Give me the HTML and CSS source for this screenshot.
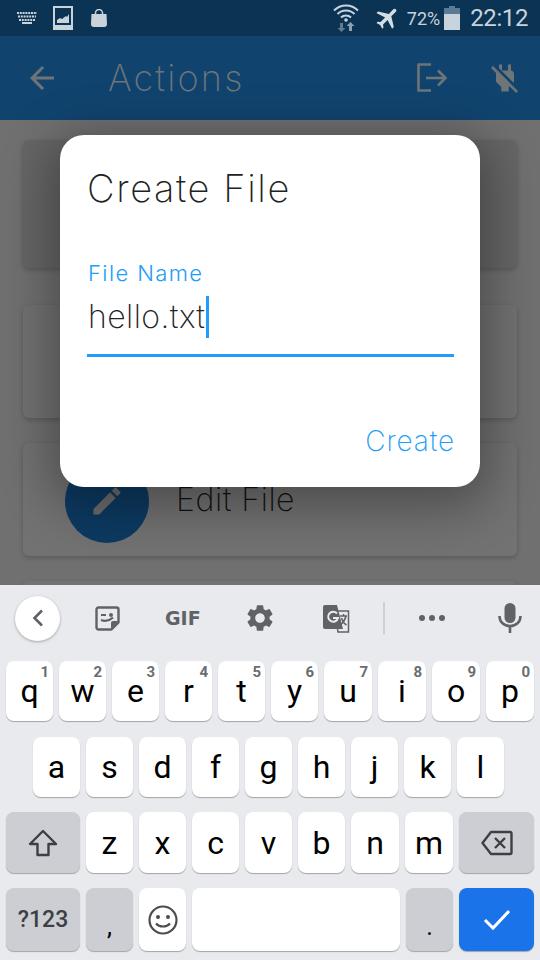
FILE: index.html
```html
<!DOCTYPE html>
<html lang="en">
<head>
  <meta charset="UTF-8">
  <meta name="viewport" content="width=device-width, initial-scale=1.0">
  <title>Create File</title>
  <link rel="stylesheet" href="styles.css">
</head>
<body>
  <div class="phone">

    <!-- status bar -->
    <div class="status-bar">
      <div class="status-left">
        <svg width="20" height="12" viewBox="0 0 20 12"><g fill="none" stroke="#c9d3dc" stroke-width="2"><path stroke-dasharray="2 .8" d="M0 1h20"/><path stroke-dasharray="2 .8" d="M1 4.500h18"/><path stroke-dasharray="2 .8" d="M2 8h16"/><path d="M5 11h10"/></g></svg>
        <svg class="picture-icon" width="20" height="24" viewBox="0 0 20 24"><path fill="#c9d3dc" fill-rule="evenodd" d="M0 0h20v24H0zM2 2v17h16V2z"/><path fill="#c9d3dc" d="M4 17v-3l3-2 2 1 4-3 1 1 2-3v9z"/></svg>
        <svg class="bag-icon" width="16" height="18" viewBox="0 0 16 18"><path fill="none" stroke="#c9d3dc" stroke-width="1.500" d="M4.500 5V4a3.500 3.500 0 0 1 7 0v1"/><path fill="#c9d3dc" d="M.5 5h15l.5 10c0 2-1 3-3 3H3c-2 0-3-1-3-3z"/></svg>
      </div>
      <div class="status-right">
        <svg class="wifi-icon" width="26" height="30" viewBox="0 0 26 30"><g fill="none" stroke="#c9d3dc" stroke-width="2"><path d="M1 7.500a17 17 0 0 1 24 0"/><path d="M4.500 11a12 12 0 0 1 17 0"/><path d="M8 14.500a7 7 0 0 1 10 0"/></g><circle cx="13" cy="17" r="1.800" fill="#c9d3dc"/><path fill="#66798a" d="M7 20h3v5h2.500l-4 4-4-4H7z"/><path fill="#8fa0ae" d="M16 28h3v-5h2.500l-4-4-4 4H16z"/></svg>
        <svg class="plane-icon" width="28" height="28" viewBox="0 0 24 24"><path fill="#d5dde4" transform="rotate(45 12 12)" d="M21 16v-2l-8-5V3.500c0-.83-.67-1.500-1.500-1.500S10 2.670 10 3.500V9l-8 5v2l8-2.500V19l-2 1.500V22l3.500-1 3.500 1v-1.500L13 19v-5.500l8 2.500z"/></svg>
        <span class="battery-text">72%</span>
        <svg class="battery-icon" width="16" height="24" viewBox="0 0 16 24"><path fill="#5b7a94" d="M5 0h6v2h5v7H0V2h5z"/><path fill="#c9d3dc" d="M0 8h16v16H0z"/></svg>
        <span class="clock">22:12</span>
      </div>
    </div>

    <!-- app bar -->
    <header class="app-bar">
      <svg class="back-icon" width="36" height="36" viewBox="0 0 24 24"><path fill="#6f7478" d="M20 11H7.830l5.590-5.590L12 4l-8 8 8 8 1.410-1.410L7.830 13H20v-2z"/></svg>
      <h1 class="app-title">Actions</h1>
      <svg class="exit-icon" width="32" height="30" viewBox="0 0 32 30"><path fill="none" stroke="#6f7478" stroke-width="2.600" stroke-linejoin="round" d="M15 1.500H2.500v26H15"/><path fill="none" stroke="#6f7478" stroke-width="2.600" d="M10 15h19M22 7.500l7.500 7.500-7.500 7.500"/></svg>
      <svg class="plug-icon" width="36" height="36" viewBox="0 0 24 24"><path fill="#6f7478" d="M18 14.490V9c0-1-1.010-2.010-2-2V3h-2v4h-4V3H8v2.480l9.510 9.500.49-.49zm-1.760 1.770L7.200 7.200l-.01.010L3.980 4 2.710 5.250l3.360 3.360C6.040 8.740 6 8.870 6 9v5.480L9.500 18v3h5v-3l.48-.48L19.450 22l1.260-1.280-4.470-4.460z"/></svg>
    </header>

    <!-- cards behind the dialog -->
    <main class="content">
      <div class="card card-top"></div>
      <div class="card card-action"></div>
      <div class="card card-action">
        <div class="action-circle">
          <svg width="36" height="36" viewBox="0 0 24 24"><path fill="#6d6d6d" d="M3 17.250V21h3.750L17.810 9.940l-3.750-3.750L3 17.250zM20.710 7.040c.39-.39.39-1.020 0-1.410l-2.340-2.340c-.39-.39-1.020-.39-1.410 0l-1.830 1.830 3.750 3.750 1.830-1.830z"/></svg>
        </div>
        <span class="action-label">Edit File</span>
      </div>
      <div class="card card-action"></div>
    </main>

    <!-- dialog -->
    <section class="dialog">
      <h2 class="dialog-title">Create File</h2>
      <label class="field-label">File Name</label>
      <div class="field-value">hello.txt<span class="caret"></span></div>
      <div class="dialog-actions"><span class="create-btn">Create</span></div>
    </section>

    <!-- keyboard -->
    <div class="keyboard">
      <div class="kb-tools">
        <div class="kb-back">
          <svg width="14" height="20" viewBox="0 0 14 20"><path fill="none" stroke="#5f6368" stroke-width="2.600" d="M11 2.500 3.500 10l7.500 7.500"/></svg>
        </div>
        <svg class="tool-sticker" width="25" height="25" viewBox="0 0 25 25"><path fill="none" stroke="#5f6368" stroke-width="2.400" stroke-linejoin="round" d="M3.500 1.500h18a2 2 0 0 1 2 2v13l-7 7h-13a2 2 0 0 1-2-2v-18a2 2 0 0 1 2-2z"/><path fill="#5f6368" d="M16 23v-6a2 2 0 0 1 2-2h6zM6 8h5v2H6zM16 7a2 2 0 1 1 0 4 2 2 0 0 1 0-4z"/><path fill="none" stroke="#5f6368" stroke-width="2.200" d="M6 14c4 1.500 8 1 12-2.500"/></svg>
        <span class="tool-gif">GIF</span>
        <svg class="tool-gear" width="32" height="32" viewBox="0 0 24 24"><path fill="#5f6368" d="M19.140 12.940c.04-.3.06-.61.06-.94 0-.32-.02-.64-.07-.94l2.030-1.580c.18-.14.23-.41.12-.61l-1.920-3.320c-.12-.22-.37-.29-.59-.22l-2.390.96c-.5-.38-1.030-.7-1.620-.94l-.36-2.540c-.04-.24-.24-.41-.48-.41h-3.840c-.24 0-.43.17-.47.41l-.36 2.540c-.59.24-1.130.57-1.620.94l-2.390-.96c-.22-.08-.47 0-.59.22L2.740 8.870c-.12.21-.08.47.12.61l2.030 1.580c-.05.3-.09.63-.09.94s.02.64.07.94l-2.030 1.580c-.18.14-.23.41-.12.61l1.920 3.320c.12.22.37.29.59.22l2.390-.96c.5.38 1.030.7 1.620.94l.36 2.540c.05.24.24.41.48.41h3.840c.24 0 .44-.17.47-.41l.36-2.540c.59-.24 1.130-.56 1.620-.94l2.390.96c.22.08.47 0 .59-.22l1.920-3.320c.12-.22.07-.47-.12-.61l-2.010-1.580zM12 15.600c-1.980 0-3.600-1.620-3.600-3.600s1.620-3.600 3.600-3.600 3.600 1.620 3.600 3.600-1.620 3.600-3.600 3.600z"/></svg>
        <svg class="tool-translate" width="28" height="28" viewBox="0 0 28 28"><path fill="none" stroke="#5f6368" stroke-width="1.500" d="M12 6h13.500v21H15z"/><path fill="#5f6368" d="M2 0h12l6 24H2a2 2 0 0 1-2-2V2a2 2 0 0 1 2-2z"/><path fill="none" stroke="#e8eaed" stroke-width="2" d="M14 8.500a5 5 0 1 0 1 4.500H10"/><path fill="none" stroke="#5f6368" stroke-width="1.600" d="M17 11h7M20.500 9v2M23 11c-1 4-3 7-6 9M18.500 13c1 3 3 6 5 7"/></svg>
        <div class="tool-divider"></div>
        <svg class="tool-dots" width="26" height="6" viewBox="0 0 26 6" fill="#5f6368"><circle cx="3" cy="3" r="3"/><circle cx="13" cy="3" r="3"/><circle cx="23" cy="3" r="3"/></svg>
        <svg class="tool-mic" width="24" height="30" viewBox="0 0 24 30"><rect x="6.500" y="0" width="11" height="20" rx="5.500" fill="#5f6368"/><path fill="none" stroke="#5f6368" stroke-width="2.600" d="M1.500 13c0 6 4.500 10 10.500 10s10.500-4 10.500-10M12 23v7"/></svg>
      </div>

      <div class="kb-row row-1">
        <div class="key">q<sup class="hint">1</sup></div>
        <div class="key">w<sup class="hint">2</sup></div>
        <div class="key">e<sup class="hint">3</sup></div>
        <div class="key">r<sup class="hint">4</sup></div>
        <div class="key">t<sup class="hint">5</sup></div>
        <div class="key">y<sup class="hint">6</sup></div>
        <div class="key key-48">u<sup class="hint">7</sup></div>
        <div class="key key-48">i<sup class="hint">8</sup></div>
        <div class="key key-48">o<sup class="hint">9</sup></div>
        <div class="key key-48">p<sup class="hint">0</sup></div>
      </div>
      <div class="kb-row row-2">
        <div class="key">a</div>
        <div class="key">s</div>
        <div class="key">d</div>
        <div class="key">f</div>
        <div class="key">g</div>
        <div class="key">h</div>
        <div class="key">j</div>
        <div class="key">k</div>
        <div class="key">l</div>
      </div>
      <div class="kb-row row-3">
        <div class="key key-left key-grey">
          <svg width="30" height="28" viewBox="0 0 30 28"><path fill="none" stroke="#3c4043" stroke-width="2.400" stroke-linejoin="round" d="M15 2 2 15h7.500v11h11V15H28z"/></svg>
        </div>
        <div class="key">z</div>
        <div class="key">x</div>
        <div class="key">c</div>
        <div class="key">v</div>
        <div class="key">b</div>
        <div class="key key-48">n</div>
        <div class="key key-48">m</div>
        <div class="key key-right key-grey">
          <svg width="32" height="26" viewBox="0 0 32 26"><path fill="none" stroke="#3c4043" stroke-width="2.400" stroke-linejoin="round" d="M10 2h19a1.500 1.500 0 0 1 1.500 1.500v19A1.500 1.500 0 0 1 29 24H10L1.500 13z"/><path fill="none" stroke="#3c4043" stroke-width="2.400" d="m14 8 10 10M24 8 14 18"/></svg>
        </div>
      </div>
      <div class="kb-row row-4">
        <div class="key key-left key-grey key-symbols">?123</div>
        <div class="key key-grey key-punct">,</div>
        <div class="key">
          <svg width="30" height="30" viewBox="0 0 30 30"><circle cx="15" cy="15" r="13.500" fill="none" stroke="#4a4d50" stroke-width="2.200"/><circle cx="10" cy="12" r="2" fill="#4a4d50"/><circle cx="20" cy="12" r="2" fill="#4a4d50"/><path fill="none" stroke="#4a4d50" stroke-width="2.200" d="M8 18.500c3.500 4 10.500 4 14 0"/></svg>
        </div>
        <div class="key key-space"></div>
        <div class="key key-grey key-punct">.</div>
        <div class="key key-right key-done">
          <svg width="28" height="22" viewBox="0 0 28 22"><path fill="none" stroke="#fff" stroke-width="3" d="m2 11 8 8L26 2"/></svg>
        </div>
      </div>
    </div>

  </div>
</body>
</html>
```

FILE: styles.css
```css
/* page */
body {
  margin: 0;
  background-color: #707070;
  font-family: Inter, "Open Sans", sans-serif;
}

.phone {
  position: relative;
  display: flex;
  flex-direction: column;
  width: 540px;
  height: 960px;
  overflow: hidden;
}

/* status bar */
.status-bar {
  display: flex;
  justify-content: space-between;
  align-items: center;
  height: 36px;
  padding: 0 12px 0 17px;
  background-color: #0b3454;
  color: #c9d3dc;
  font-family: Roboto, sans-serif;
  flex-shrink: 0;
}

.status-left,
.status-right {
  display: flex;
  align-items: center;
}

.status-left {
  gap: 16px;
}

.picture-icon {
  margin-top: -1px;
}

.bag-icon {
  margin-left: 2px;
}

.wifi-icon {
  margin-right: 15px;
}

.plane-icon {
  margin-right: 5px;
}

.battery-text {
  font-size: 18px;
  margin-right: 4px;
}

.battery-icon {
  margin-right: 10px;
}

.clock {
  font-size: 24px;
  letter-spacing: -0.4px;
}

/* app bar */
.app-bar {
  display: flex;
  align-items: center;
  height: 84px;
  background-color: #10446f;
  flex-shrink: 0;
}

.back-icon {
  margin-left: 24px;
}

.app-title {
  flex: 1;
  margin: 0 0 0 48px;
  color: #6f7478;
  font-size: 36px;
  font-weight: 200;
  letter-spacing: 2.2px;
}

.exit-icon {
  margin-right: 39px;
}

.plug-icon {
  margin-right: 17px;
}

/* cards behind the dialog */
.content {
  display: flex;
  flex-direction: column;
  gap: 25px;
  flex: 1;
  min-height: 0;
  padding: 20px 23px 0;
  overflow: hidden;
  background-color: #707070;
}

.card {
  display: flex;
  align-items: center;
  flex-shrink: 0;
  border-radius: 6px;
  background-color: #727272;
  box-shadow: 0 2px 5px rgba(0, 0, 0, 0.2);
}

.card-top {
  height: 128px;
  margin-bottom: 12px;
  background-color: #666;
}

.card-action {
  height: 113px;
}

.action-circle {
  display: flex;
  justify-content: center;
  align-items: center;
  width: 84px;
  height: 84px;
  margin-left: 42px;
  margin-top: 2px;
  border-radius: 50%;
  background-color: #0c3a62;
}

.action-label {
  margin-left: 27px;
  color: #111;
  font-size: 32px;
  font-weight: 200;
  letter-spacing: 0.55px;
}

/* dialog */
.dialog {
  position: absolute;
  left: 60px;
  top: 135px;
  box-sizing: border-box;
  width: 420px;
  height: 352px;
  padding: 28px 26px 0 27px;
  border-radius: 24px;
  background-color: #fff;
  box-shadow: 0 10px 50px 10px rgba(0, 0, 0, 0.33);
}

.dialog-title {
  margin: 0;
  color: #222;
  font-size: 38px;
  font-weight: 200;
  line-height: 50px;
  letter-spacing: 1.6px;
}

.field-label {
  display: block;
  margin: 46px 0 0 1px;
  color: #229cf8;
  font-size: 22px;
  font-weight: 300;
  line-height: 28px;
  letter-spacing: 1.4px;
}

.field-value {
  display: flex;
  align-items: center;
  height: 51px;
  margin-top: 4px;
  padding: 0 0 12px 1px;
  border-bottom: 3px solid #229cf8;
  color: #222;
  font-size: 32px;
  font-weight: 200;
  letter-spacing: 0.45px;
}

.caret {
  width: 3px;
  height: 42px;
  margin-left: 1px;
  background-color: #229cf8;
}

.dialog-actions {
  display: flex;
  justify-content: flex-end;
  margin-top: 67px;
}

.create-btn {
  margin-right: -1px;
  color: #229cf8;
  font-size: 28px;
  font-weight: 200;
  letter-spacing: 0.9px;
}

/* keyboard */
.keyboard {
  height: 375px;
  padding: 0 6px;
  box-sizing: border-box;
  background-color: #e8eaed;
  flex-shrink: 0;
  font-family: Roboto, sans-serif;
}

.kb-tools {
  display: flex;
  align-items: center;
  height: 66px;
  margin-bottom: 10px;
}

.kb-back {
  display: flex;
  justify-content: center;
  align-items: center;
  width: 45px;
  height: 45px;
  margin-left: 9px;
  border-radius: 50%;
  background-color: #fff;
  box-shadow: 0 1px 3px rgba(0, 0, 0, 0.3);
}

.tool-sticker {
  margin-left: 35px;
}

.tool-gif {
  margin-left: 45px;
  color: #5f6368;
  font-family: "DejaVu Sans", sans-serif;
  font-size: 19px;
  font-weight: 700;
}

.tool-gear {
  margin-left: 43px;
}

.tool-translate {
  margin-left: 47px;
  margin-top: 2px;
}

.tool-divider {
  width: 2px;
  height: 32px;
  margin-left: 32px;
  background-color: #cdd0d4;
}

.tool-dots {
  margin-left: 34px;
}

.tool-mic {
  margin-left: 53px;
}

.kb-row {
  display: flex;
  gap: 6px;
}

.row-1 {
  height: 60px;
  margin-bottom: 16px;
}

.row-2 {
  height: 60px;
  margin-bottom: 15px;
  padding: 0 27px;
}

.row-3 {
  height: 61px;
  margin-bottom: 15px;
}

.row-4 {
  height: 63px;
}

.key {
  position: relative;
  display: flex;
  justify-content: center;
  align-items: center;
  flex: 0 0 47px;
  border-radius: 8px;
  background-color: #fff;
  box-shadow: 0 1px 1px rgba(0, 0, 0, 0.3);
  color: #000;
  font-size: 32px;
}

.key-48 {
  flex-basis: 48px;
}

.hint {
  position: absolute;
  top: 4px;
  right: 4px;
  color: #6a6d70;
  font-size: 15px;
  font-weight: 700;
  line-height: 1;
}

.key-left {
  flex-basis: 74px;
}

.key-right {
  flex-basis: 75px;
}

.key-grey {
  background-color: #ccced4;
}

.key-symbols {
  color: #3c4043;
  font-size: 23px;
  font-weight: 500;
}

.key-punct {
  padding-top: 14px;
  box-sizing: border-box;
  font-size: 25px;
}

.key-space {
  flex-basis: 208px;
}

.key-done {
  background-color: #1a73e8;
}
```
